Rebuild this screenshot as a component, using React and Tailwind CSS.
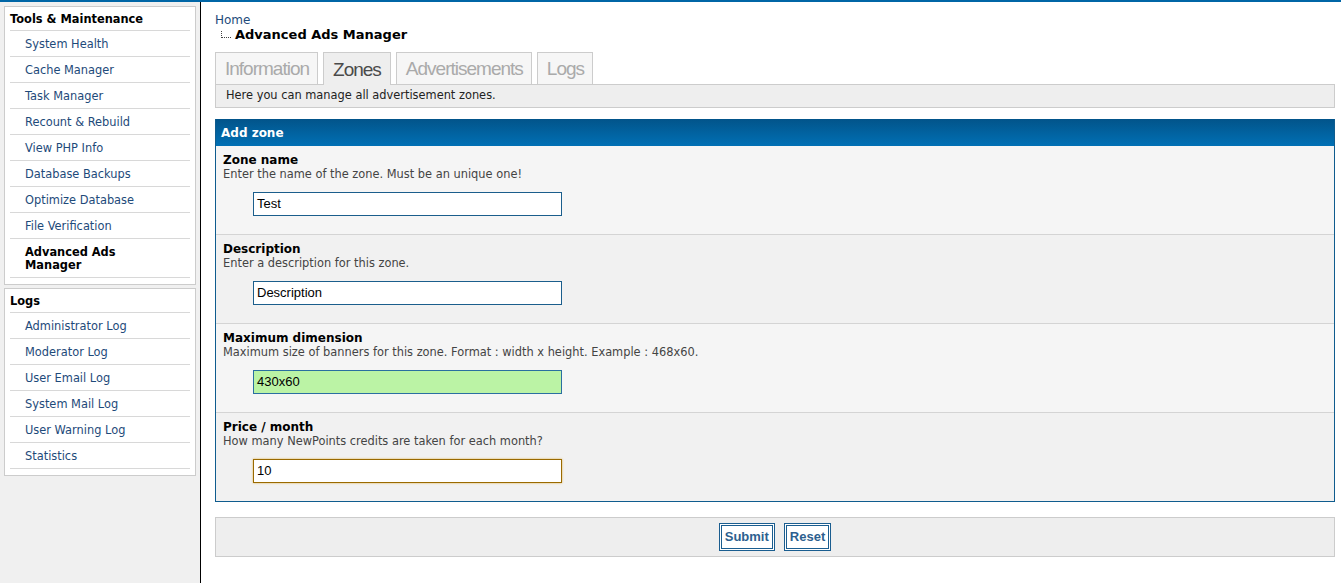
const toolsItems = [
  "System Health",
  "Cache Manager",
  "Task Manager",
  "Recount & Rebuild",
  "View PHP Info",
  "Database Backups",
  "Optimize Database",
  "File Verification",
];

const logItems = [
  "Administrator Log",
  "Moderator Log",
  "User Email Log",
  "System Mail Log",
  "User Warning Log",
  "Statistics",
];

const rows = [
  {
    label: "Zone name",
    desc: "Enter the name of the zone. Must be an unique one!",
    value: "Test",
    bg: "bg-[#f5f5f5]",
    input: "bg-white border-[#1b5e8c]",
  },
  {
    label: "Description",
    desc: "Enter a description for this zone.",
    value: "Description",
    bg: "bg-[#f1f1f1]",
    input: "bg-white border-[#1b5e8c]",
  },
  {
    label: "Maximum dimension",
    desc: "Maximum size of banners for this zone. Format : width x height. Example : 468x60.",
    value: "430x60",
    bg: "bg-[#f5f5f5]",
    input: "bg-[#bbf3a5] border-[#2a6fa0]",
  },
  {
    label: "Price / month",
    desc: "How many NewPoints credits are taken for each month?",
    value: "10",
    bg: "bg-[#f1f1f1]",
    input: "bg-white border-[#9a6a00] shadow-[0_0_2px_#e0b050]",
  },
];

function SideBox({ title, items, children }) {
  return (
    <div className="mx-[4px] bg-white border border-[#cccccc] px-[5px] pb-[6px]">
      <div className="h-[24px] pt-[2px] border-b border-[#d8d8d8] flex items-center font-bold text-[11.4px] text-black">
        {title}
      </div>
      {items.map((it) => (
        <div
          key={it}
          className="h-[26px] pt-[2px] border-b border-[#d8d8d8] flex items-center pl-[15px] text-[11.4px] text-[#1e4a7a]"
        >
          {it}
        </div>
      ))}
      {children}
    </div>
  );
}

function Tab({ label, active }) {
  return (
    <div
      className={
        active
          ? "h-[33px] -mb-px relative z-10 px-[9px] pt-[2px] flex items-center border border-b-0 border-[#cccccc] bg-[#eeeeee] text-[#4a4a4a] text-[19px] tracking-[-1px]"
          : "h-[32px] pl-[9px] pr-[8px] pt-[2px] flex items-center border border-b-0 border-[#cccccc] bg-[#f6f6f6] text-[#aaaaaa] text-[19px] tracking-[-1px]"
      }
      style={{ fontFamily: '"Liberation Sans", Arial, sans-serif' }}
    >
      {label}
    </div>
  );
}

export default function App() {
  return (
    <div
      className="min-h-screen flex border-t-2 border-[#0066a6] bg-white"
      style={{ fontFamily: '"DejaVu Sans", Verdana, sans-serif' }}
    >
      <aside className="w-[201px] shrink-0 bg-[#f0f0f0] border-r border-black pt-[4px] flex flex-col gap-[3px]">
        <SideBox title="Tools & Maintenance" items={toolsItems}>
          <div className="border-b border-[#d8d8d8] pl-[15px] pt-[7px] pb-[5px] text-[11.4px] leading-[13px] font-bold text-black">
            Advanced Ads
            <br />
            Manager
          </div>
        </SideBox>
        <SideBox title="Logs" items={logItems} />
      </aside>

      <main className="flex-1 pl-[14px] pr-[6px] pt-[11px]">
        <div className="text-[12px] leading-[14px] text-[#1e4a7a]">Home</div>
        <div className="flex items-end h-[16px] leading-[16px]">
          <span className="ml-[6px] mb-[5px] w-[10px] h-[7px] border-l border-b border-dotted border-[#444]" />
          <span className="ml-[4px] text-[13px] font-bold text-black">Advanced Ads Manager</span>
        </div>

        <div className="mt-[9px] flex items-end gap-[5px]">
          <Tab label="Information" />
          <Tab label="Zones" active />
          <Tab label="Advertisements" />
          <Tab label="Logs" />
        </div>
        <div className="h-[24px] border border-[#cccccc] bg-[#eeeeee] flex items-center pl-[10px] text-[11.4px] text-[#222]">
          Here you can manage all advertisement zones.
        </div>

        <div className="mt-[11px] border border-[#0f5c8e] border-t-0">
          <div className="h-[27px] pt-[1px] bg-gradient-to-b from-[#02548a] to-[#0070b5] flex items-center pl-[5px] text-[12px] font-bold text-white">
            Add zone
          </div>
          {rows.map((r, i) => (
            <div
              key={r.label}
              className={`${r.bg} px-[7px] pt-[7px] pb-[18px] ${i < rows.length - 1 ? "border-b border-[#d4d4d4]" : ""}`}
            >
              <div className="text-[12px] leading-[14px] font-bold text-black">{r.label}</div>
              <div className="text-[11.4px] leading-[14px] text-[#444]">{r.desc}</div>
              <div
                className={`mt-[11px] ml-[30px] w-[309px] h-[24px] border ${r.input} flex items-center pl-[3px] text-[13px] text-black`}
                style={{ fontFamily: '"Liberation Sans", Arial, sans-serif' }}
              >
                {r.value}
              </div>
            </div>
          ))}
        </div>

        <div className="mt-[15px] h-[40px] border border-[#cccccc] bg-[#eeeeee] flex items-center justify-center gap-[9px]">
          {["Submit", "Reset"].map((b) => (
            <button
              key={b}
              className="h-[28px] px-[3px] bg-white border-[3px] border-double border-[#1a5d8f] text-[13px] font-bold text-[#2d5f8f]"
              style={{ fontFamily: '"Liberation Sans", Arial, sans-serif' }}
            >
              {b}
            </button>
          ))}
        </div>
      </main>
    </div>
  );
}
